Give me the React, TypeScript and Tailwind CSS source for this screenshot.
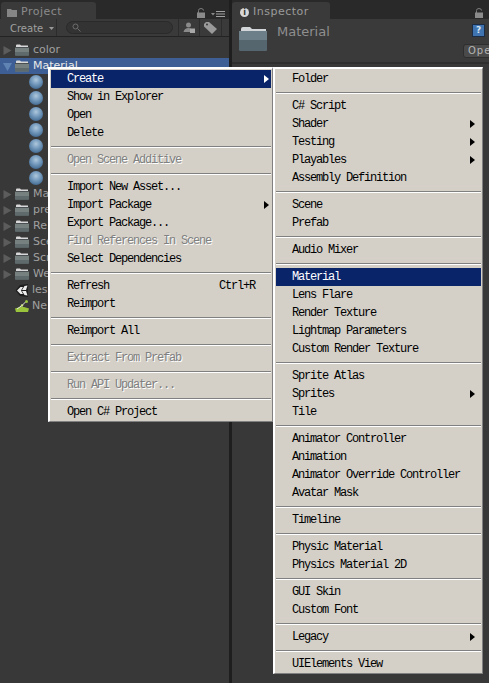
import React from 'react';

type Entry = { label?: string; sep?: boolean; arrow?: boolean; disabled?: boolean; active?: boolean; shortcut?: string };

const mainMenu: Entry[] = [
  { label: 'Create', arrow: true, active: true },
  { label: 'Show in Explorer' },
  { label: 'Open' },
  { label: 'Delete' },
  { sep: true },
  { label: 'Open Scene Additive', disabled: true },
  { sep: true },
  { label: 'Import New Asset...' },
  { label: 'Import Package', arrow: true },
  { label: 'Export Package...' },
  { label: 'Find References In Scene', disabled: true },
  { label: 'Select Dependencies' },
  { sep: true },
  { label: 'Refresh', shortcut: 'Ctrl+R' },
  { label: 'Reimport' },
  { sep: true },
  { label: 'Reimport All' },
  { sep: true },
  { label: 'Extract From Prefab', disabled: true },
  { sep: true },
  { label: 'Run API Updater...', disabled: true },
  { sep: true },
  { label: 'Open C# Project' },
];

const createMenu: Entry[] = [
  { label: 'Folder' },
  { sep: true },
  { label: 'C# Script' },
  { label: 'Shader', arrow: true },
  { label: 'Testing', arrow: true },
  { label: 'Playables', arrow: true },
  { label: 'Assembly Definition' },
  { sep: true },
  { label: 'Scene' },
  { label: 'Prefab' },
  { sep: true },
  { label: 'Audio Mixer' },
  { sep: true },
  { label: 'Material', active: true },
  { label: 'Lens Flare' },
  { label: 'Render Texture' },
  { label: 'Lightmap Parameters' },
  { label: 'Custom Render Texture' },
  { sep: true },
  { label: 'Sprite Atlas' },
  { label: 'Sprites', arrow: true },
  { label: 'Tile' },
  { sep: true },
  { label: 'Animator Controller' },
  { label: 'Animation' },
  { label: 'Animator Override Controller' },
  { label: 'Avatar Mask' },
  { sep: true },
  { label: 'Timeline' },
  { sep: true },
  { label: 'Physic Material' },
  { label: 'Physics Material 2D' },
  { sep: true },
  { label: 'GUI Skin' },
  { label: 'Custom Font' },
  { sep: true },
  { label: 'Legacy', arrow: true },
  { sep: true },
  { label: 'UIElements View' },
];

const FolderIcon = () => (
  <svg width="14" height="12" viewBox="0 0 14 12" className="shrink-0">
    <path d="M1 1.5 Q1 0.5 2 0.5 H5 L6 1.5 H13 V4 H1 Z" fill="#d8d8d8" />
    <rect x="0" y="3" width="14" height="1" fill="#4a4f52" />
    <path d="M0 4 H14 V10.5 Q14 11.5 13 11.5 H1 Q0 11.5 0 10.5 Z" fill="#75807f" />
    <rect x="0" y="8" width="14" height="3.5" fill="#5f6a6c" />
  </svg>
);

const BigFolder = () => (
  <svg width="28" height="25" viewBox="0 0 28 25" className="shrink-0">
    <path d="M2 3 Q2 1 4 1 H11 L13 3 H27 V10 H2 Z" fill="#d2d6d8" />
    <path d="M0 5 H28 V23 Q28 25 26 25 H2 Q0 25 0 23 Z" fill="#6d7f88" />
    <path d="M0 14 H28 V23 Q28 25 26 25 H2 Q0 25 0 23 Z" fill="#56666e" />
  </svg>
);

const Ball = () => (
  <div className="w-[14px] h-[14px] rounded-full bg-[radial-gradient(circle_at_50%_35%,#b0c8dc_0%,#7a9fc0_35%,#4a7299_75%,#34506e_100%)]" />
);

const TreeArrow = ({ open }: { open?: boolean }) => (
  <svg width="9" height="9" viewBox="0 0 9 9" className="shrink-0">
    {open ? <path d="M0 1 H9 L4.5 9 Z" fill="#5f84b4" /> : <path d="M0.5 0 L8.5 4.5 L0.5 9 Z" fill="#5c5c5c" />}
  </svg>
);

const TreeRow = ({ label, open, selected }: { label: string; open?: boolean; selected?: boolean }) => (
  <div className={`h-4 flex items-center pl-[3px] gap-[3px] ${selected ? 'bg-[#3e5f96]' : ''}`}>
    <TreeArrow open={open} />
    <FolderIcon />
    <span className={`ml-[1px] ${selected ? 'text-[#e8e8e8]' : 'text-[#a0a0a0]'}`}>{label}</span>
  </div>
);

const Lock = () => (
  <svg width="8" height="10" viewBox="0 0 8 10">
    <path d="M1.5 5 V2.5 Q1.5 0.5 4 0.5 Q6.5 0.5 6.5 2.5" stroke="#7c7c7c" fill="none" />
    <rect y="4.5" width="8" height="5.5" fill="#8a8a8a" />
  </svg>
);

const MenuList = ({ items, className, arrowRight }: { items: Entry[]; className: string; arrowRight: string }) => (
  <div className={`absolute bg-[#d4d0c8] border-t-2 border-l-2 border-t-white border-l-white border-r border-b border-r-[#808080] border-b-[#808080] pt-[1px] px-[1px] font-['Liberation_Mono',monospace] text-[12px] tracking-[-1.2px] leading-[18px] text-black ${className}`}>
    {items.map((item, i) =>
      item.sep ? (
        <div key={i} className="h-[9px] flex flex-col justify-center">
          <div className="h-[1px] bg-[#808080]" />
          <div className="h-[1px] bg-white" />
        </div>
      ) : (
        <div key={i} className={`relative h-[18px] flex items-center justify-between pl-[16px] pr-[16px] ${item.active ? 'bg-[#0a246a] text-white' : ''}`}>
          <span className={item.disabled ? 'text-[#808080] [text-shadow:1px_1px_0_#fff]' : ''}>{item.label}</span>
          {item.shortcut && <span>{item.shortcut}</span>}
          {item.arrow && (
            <svg width="5" height="8" viewBox="0 0 5 8" className={`absolute top-[5px] ${arrowRight}`}>
              <path d="M0 0 L5 4 L0 8 Z" fill={item.active ? '#fff' : '#000'} />
            </svg>
          )}
        </div>
      ),
    )}
  </div>
);

export default function App() {
  return (
    <div className="relative w-[489px] h-[683px] overflow-hidden bg-[#292929] font-['DejaVu_Sans',sans-serif] text-[11px] text-[#a0a0a0] flex">
      {/* Project panel */}
      <div className="w-[229px] flex flex-col shrink-0">
        <div className="h-[19px] pt-[2px] flex justify-between">
          <div className="w-[95px] h-[17px] ml-[1px] pt-[3px] bg-[#3a3a3a] rounded-t-[3px] flex items-center gap-[4px] pl-[6px] text-[#8a8a8a] tracking-[0.5px]">
            <svg width="10" height="9" viewBox="0 0 10 9">
              <path d="M0 1 H4 L5 2 H10 V9 H0 Z" fill="#858585" />
            </svg>
            Project
          </div>
          <div className="flex items-start gap-[6px] pr-[4px] pt-[6px]">
            <Lock />
            <svg width="14" height="6" viewBox="0 0 14 6" className="mt-[3px]">
              <path d="M0 2 H4 L2 4.5 Z" fill="#8a8a8a" />
              <path d="M5 0.5 H14 M5 3 H14 M5 5.5 H14" stroke="#a0a0a0" />
            </svg>
          </div>
        </div>
        <div className="h-[18px] bg-[#3a3a3a] border-b border-[#232323] flex items-center">
          <div className="w-[57px] flex items-center pl-[10px] pt-[1px] gap-[6px] border-r border-[#2c2c2c] h-full text-[10px] text-[#a0a0a0]">
            Create
            <svg width="5" height="3" viewBox="0 0 5 3"><path d="M0 0 H5 L2.5 3 Z" fill="#9a9a9a" /></svg>
          </div>
          <div className="ml-[9px] w-[107px] h-[13px] rounded-full bg-[#333333] border border-[#2a2a2a] flex items-center pl-[5px]">
            <svg width="9" height="9" viewBox="0 0 9 9" fill="none" stroke="#6e6e6e">
              <circle cx="3.5" cy="3.5" r="2.5" />
              <path d="M5.5 5.5 L8.5 8.5" />
            </svg>
          </div>
          <div className="ml-[5px] w-[22px] h-full border-x border-[#2c2c2c] flex items-center justify-center">
            <svg width="12" height="11" viewBox="0 0 12 11">
              <circle cx="5.5" cy="3" r="2.5" fill="#8a8a8a" />
              <path d="M0.5 10 Q1.5 6 5.5 6 Q8 6 8 7 V10 Z" fill="#8a8a8a" />
              <rect x="7" y="6.5" width="5" height="4.5" fill="#a8a8a8" />
            </svg>
          </div>
          <div className="w-[22px] h-full border-r border-[#2c2c2c] flex items-center justify-center">
            <svg width="13" height="12" viewBox="0 0 13 12">
              <path d="M0 2 L2 0 H5 L13 7 L8 12 L0 4.5 Z" fill="#9a9a9a" />
              <circle cx="3" cy="2.5" r="1" fill="#3a3a3a" />
            </svg>
          </div>
        </div>
        <div className="flex-1 bg-[#383838] pt-[5px]">
          <TreeRow label="color" />
          <TreeRow label="Material" open selected />
          {[0, 1, 2, 3, 4, 5, 6].map((n) => (
            <div key={n} className="h-4 flex items-center pl-[29px]">
              <Ball />
            </div>
          ))}
          <TreeRow label="Ma" />
          <TreeRow label="pre" />
          <TreeRow label="Re" />
          <TreeRow label="Sce" />
          <TreeRow label="Scr" />
          <TreeRow label="We" />
          <div className="h-4 flex items-center pl-[15px] gap-[3px]">
            <svg width="14" height="13" viewBox="0 0 14 13">
              <path d="M0.5 6.5 L5 1 L13 0 V13 L5 12 Z" fill="#1d1d1d" />
              <path d="M2 6.5 L5.5 3 H8 L6 6.5 L8 10 H5.5 Z" fill="#ececec" />
              <path d="M7 6 L9.5 2 L12.5 1.5 L11 6 Z M7 7 H11 L12.5 11.5 L9.5 11 Z" fill="#ececec" />
            </svg>
            <span>les</span>
          </div>
          <div className="h-4 flex items-center pl-[15px] gap-[3px]">
            <svg width="14" height="12" viewBox="0 0 14 12">
              <path d="M0 8.5 L1 12 H13 L14 8.5 L9 7 H5 Z" fill="#9ac43c" />
              <path d="M2 9 L7 5.5 L11 1.5" stroke="#e6e6e6" strokeWidth="1" fill="none" />
              <circle cx="11.5" cy="1.5" r="1.5" fill="#9ac43c" />
              <circle cx="7" cy="5.5" r="1.2" fill="#cfe88a" />
            </svg>
            <span>Ne</span>
          </div>
        </div>
      </div>

      <div className="w-[3px] bg-[#1e1e1e] shrink-0" />

      {/* Inspector panel */}
      <div className="flex-1 flex flex-col">
        <div className="relative h-[19px] pt-[2px]">
          <div className="w-[98px] h-[17px] pt-[3px] bg-[#3a3a3a] rounded-t-[3px] flex items-center gap-[4px] pl-[8px] text-[#9a9a9a] tracking-[0.5px]">
            <span className="w-[9px] h-[9px] rounded-full bg-[#d8d8d8] text-[#333] text-[8px] leading-[9px] text-center font-bold tracking-normal">i</span>
            Inspector
          </div>
          <div className="absolute left-[243px] top-[8px]">
            <Lock />
          </div>
        </div>
        <div className="relative h-[45px] bg-[#3a3a3a] border-b-2 border-[#2e2e2e] flex pl-[7px] pt-[7px]">
          <BigFolder />
          <span className="ml-[10px] -mt-[1px] text-[13px] leading-[14px] text-[#8f8f8f]">Material</span>
          <div className="absolute top-[5px] left-[240px] w-[13px] h-[13px] bg-[#3f74b0] border border-[#1c2c44] text-[9px] leading-[11px] text-center text-[#d8e4f0] font-bold">
            ?
          </div>
          <div className="absolute top-[25px] left-[231px] w-[40px] h-[14px] rounded-[3px] bg-[#4a4a4a] border border-[#2e2e2e] text-[10px] leading-[12px] pl-[4px] text-[#b4b4b4] tracking-[1px]">
            Open
          </div>
        </div>
        <div className="flex-1 bg-[#383838]" />
      </div>

      <MenuList items={mainMenu} className="left-[48px] top-[67px] w-[225px]" arrowRight="right-[2px]" />
      <MenuList items={createMenu} className="left-[273px] top-[67px] w-[210px]" arrowRight="right-[6px]" />
    </div>
  );
}
